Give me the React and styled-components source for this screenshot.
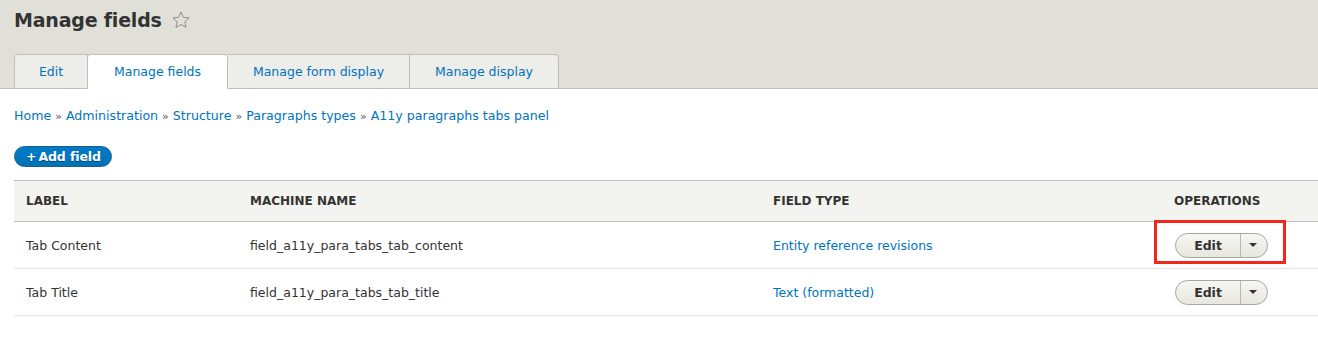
import React from "react";
import styled, { createGlobalStyle } from "styled-components";

const Global = createGlobalStyle`
  html, body { margin: 0; padding: 0; background: #fff; }
  body { font-family: "DejaVu Sans", "Open Sans", sans-serif; color: #333; }
  * { box-sizing: border-box; }
`;

const Header = styled.div`
  background: #e0e0d8;
  border-bottom: 1px solid #bfbfba;
  padding: 0 14px;
  height: 89px;
  display: flex;
  flex-direction: column;
  justify-content: space-between;
`;

const TitleRow = styled.h1`
  margin: 0;
  padding-top: 8px;
  display: flex;
  align-items: center;
  gap: 9px;
  font-size: 19px;
  line-height: 24px;
  font-weight: 700;
  color: #333;
  letter-spacing: -0.2px;
`;

const Tabs = styled.ul`
  list-style: none;
  margin: 0 0 -1px 0;
  padding: 0;
  display: flex;
  align-items: flex-end;
`;

const Tab = styled.li`
  height: 35px;
  display: flex;
  align-items: center;
  justify-content: center;
  width: ${(p) => p.$w}px;
  background: ${(p) => (p.$active ? "#fff" : "#ededea")};
  border: 1px solid #bfbfba;
  border-left-width: ${(p) => (p.$first ? 1 : 0)}px;
  border-bottom: ${(p) => (p.$active ? "1px solid #fff" : "1px solid #bfbfba")};
  border-top-left-radius: ${(p) => (p.$first || p.$active ? 4 : 0)}px;
  border-top-right-radius: ${(p) => (p.$last || p.$active ? 4 : 0)}px;
  font-size: 12.5px;
  color: #0074bd;
  ${(p) => (p.$active ? "border-left-width: 1px; margin-left: -1px; position: relative; z-index: 1;" : "")}
`;

const Content = styled.div`
  padding: 18px 0 0 14px;
`;

const Breadcrumb = styled.nav`
  font-size: 12.6px;
  color: #0074bd;
  line-height: 18px;
`;

const Sep = styled.span`
  color: #555;
  font-size: 11px;
  padding: 0 4px;
`;

const AddButton = styled.button`
  margin-top: 20px;
  display: inline-flex;
  align-items: center;
  height: 21px;
  padding: 0 10px 0 11px;
  border: 1px solid #1e5c90;
  border-radius: 11px;
  background: linear-gradient(#007bc6, #0071b8);
  color: #fff;
  font-family: inherit;
  font-weight: 700;
  font-size: 12.5px;
  letter-spacing: -0.1px;
  text-shadow: 0 1px 0 rgba(0,0,0,0.4);
  cursor: pointer;
`;

const Plus = styled.span`
  margin-right: 2px;
`;

const Table = styled.table`
  margin-top: 13px;
  width: 100%;
  border-collapse: collapse;
  font-size: 12.5px;
`;

const Th = styled.th`
  text-align: left;
  background: #f3f3ef;
  border-top: 1px solid #bfbfba;
  border-bottom: 1px solid #bfbfba;
  height: 41px;
  padding: 0 12px;
  font-weight: 700;
  font-size: 12px;
  color: #333;
  text-transform: uppercase;
  width: ${(p) => p.$w || "auto"};
`;

const Td = styled.td`
  height: 47px;
  padding: 0 12px;
  border-bottom: 1px solid #e6e4df;
  color: #333;
`;

const Link = styled.a`
  color: #0074bd;
  text-decoration: none;
`;

const OpsWrap = styled.div`
  position: relative;
  display: inline-flex;
  margin-left: 1px;
  vertical-align: middle;
  ${(p) =>
    p.$highlight
      ? `&::after {
    content: "";
    position: absolute;
    top: -13px;
    left: -21px;
    right: -18px;
    bottom: -6px;
    border: 3px solid #f0271a;
    pointer-events: none;
  }`
      : ""}
`;

const Split = styled.div`
  display: inline-flex;
  height: 25px;
  border: 1px solid #a6a6a6;
  border-radius: 13px;
  background: linear-gradient(#f6f6f3, #e7e7df);
  overflow: hidden;
`;

const SplitMain = styled.span`
  width: 65px;
  display: flex;
  align-items: center;
  justify-content: center;
  font-weight: 700;
  font-size: 12.5px;
  color: #333;
  border-right: 1px solid #b8b8b0;
`;

const SplitToggle = styled.span`
  width: 26px;
  display: flex;
  align-items: center;
  justify-content: center;
  &::after {
    content: "";
    border-left: 4px solid transparent;
    border-right: 4px solid transparent;
    border-top: 4px solid #333;
    margin-left: -2px;
  }
`;

const Star = () => (
  <svg width="20" height="20" viewBox="0 0 24 24" fill="none" stroke="#8e8e8a" strokeWidth="1.2">
    <path d="M12 2.5l2.9 6.3 6.8.7-5.1 4.6 1.5 6.8L12 17.4l-6.1 3.5 1.5-6.8-5.1-4.6 6.8-.7z" />
  </svg>
);

const Ops = ({ highlight }) => (
  <OpsWrap $highlight={highlight}>
    <Split>
      <SplitMain>Edit</SplitMain>
      <SplitToggle />
    </Split>
  </OpsWrap>
);

const rows = [
  { label: "Tab Content", machine: "field_a11y_para_tabs_tab_content", type: "Entity reference revisions", hl: true },
  { label: "Tab Title", machine: "field_a11y_para_tabs_tab_title", type: "Text (formatted)", hl: false },
];

const crumbs = ["Home", "Administration", "Structure", "Paragraphs types", "A11y paragraphs tabs panel"];

export default function App() {
  return (
    <>
      <Global />
      <Header>
        <TitleRow>
          Manage fields <Star />
        </TitleRow>
        <Tabs>
          <Tab $w={74} $first>Edit</Tab>
          <Tab $w={141} $active>Manage fields</Tab>
          <Tab $w={182}>Manage form display</Tab>
          <Tab $w={149} $last>Manage display</Tab>
        </Tabs>
      </Header>
      <Content>
        <Breadcrumb>
          {crumbs.map((c, i) => (
            <React.Fragment key={c}>
              {i > 0 && <Sep>»</Sep>}
              <Link href="#">{c}</Link>
            </React.Fragment>
          ))}
        </Breadcrumb>
        <AddButton><Plus>+</Plus>Add field</AddButton>
        <Table>
          <thead>
            <tr>
              <Th $w="224px">Label</Th>
              <Th $w="523px">Machine name</Th>
              <Th $w="401px">Field type</Th>
              <Th>Operations</Th>
            </tr>
          </thead>
          <tbody>
            {rows.map((r) => (
              <tr key={r.label}>
                <Td>{r.label}</Td>
                <Td>{r.machine}</Td>
                <Td><Link href="#">{r.type}</Link></Td>
                <Td><Ops highlight={r.hl} /></Td>
              </tr>
            ))}
          </tbody>
        </Table>
      </Content>
    </>
  );
}
